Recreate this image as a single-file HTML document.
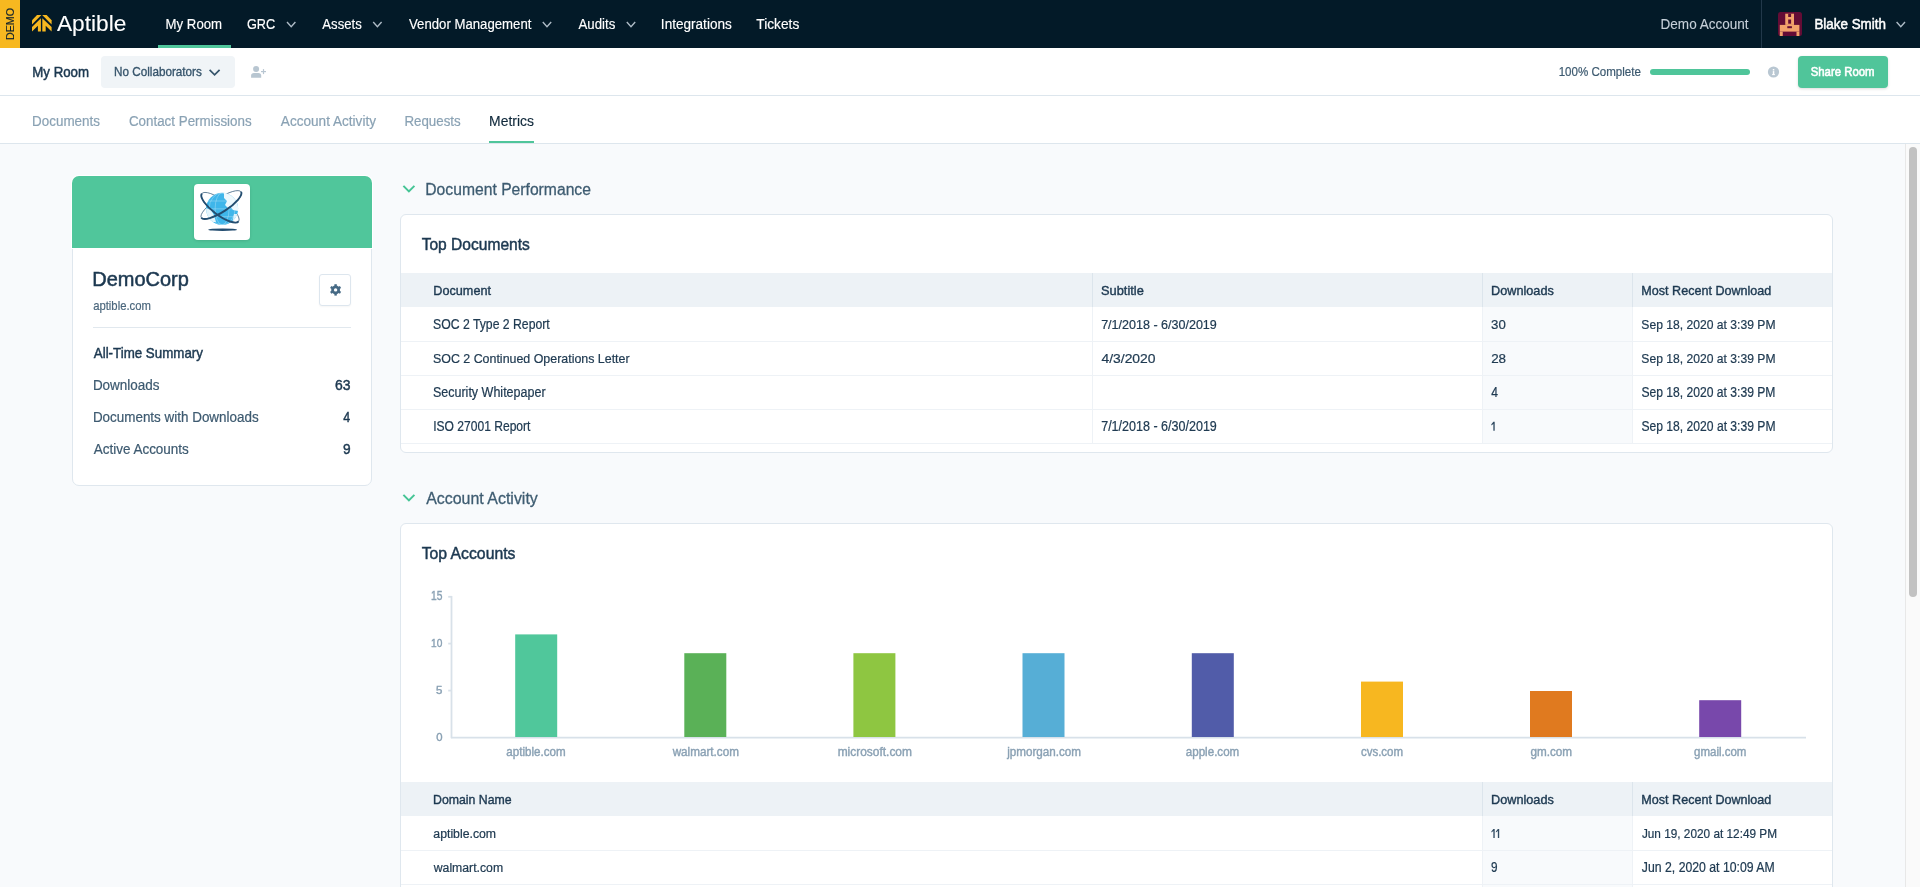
<!DOCTYPE html>
<html><head><meta charset="utf-8">
<style>
*{box-sizing:border-box;margin:0;padding:0}
html,body{width:1920px;height:887px;overflow:hidden;background:#f8fafc;font-family:"Liberation Sans",sans-serif;color:#1e3a50}
.b{position:absolute}
svg{position:absolute;overflow:visible}
</style></head>
<body>
<!-- nav -->
<div class="b" style="left:0;top:0;width:1920px;height:48px;background:#031a28"></div>
<div class="b" style="left:0;top:0;width:20px;height:48px;background:#f7b820"></div>
<div class="b" style="left:10px;top:24px;transform:translate(-50%,-50%) rotate(-90deg);font-size:10.7px;line-height:12px;color:#0b1e2c;white-space:nowrap;-webkit-text-stroke:0.2px #0b1e2c;will-change:transform">DEMO</div>
<svg style="left:0;top:0" width="60" height="48" viewBox="0 0 60 48">
  <g fill="#f7b820">
    <polygon points="37.0,14.9 41.4,14.9 32,24.4 32,20.2"/>
    <polygon points="40.9,18.3 40.9,31.5 37.9,31.5 37.9,25.8 32,31.5 32,27.0"/>
    <polygon points="42.2,14.9 46.6,14.9 51.6,20.2 51.6,24.4"/>
    <polygon points="42.3,18.3 51.6,27.0 51.6,31.5 45.7,25.8 45.7,31.5 42.3,31.5"/>
  </g>
</svg>
<div class="b" style="left:158px;top:45px;width:73px;height:3px;background:#4fc59a"></div>
<svg style="left:0;top:0" width="1920" height="48">
  <g fill="none" stroke="#aebbc6" stroke-width="1.4">
    <polyline points="287,22 291.2,26.7 295.4,22"/>
    <polyline points="373.2,22 377.4,26.7 381.6,22"/>
    <polyline points="542.8,22 547,26.7 551.2,22"/>
    <polyline points="626.8,22 631,26.7 635.2,22"/>
    <polyline points="1896.6,22 1900.8,26.7 1905,22"/>
  </g>
</svg>
<div class="b" style="left:1761px;top:0;width:1px;height:48px;background:#22384a"></div>
<svg style="left:1778px;top:12px" width="24" height="24" viewBox="0 0 24 24">
  <rect width="24" height="24" rx="2.5" fill="#640c35"/>
  <g fill="#f3a26b">
    <rect x="7.25" y="1.7" width="8.75" height="11.2"/>
    <rect x="1.8" y="12.9" width="19.6" height="6.7"/>
    <rect x="1.8" y="19.6" width="2.95" height="4.4"/>
    <rect x="18.5" y="19.6" width="2.9" height="4.4"/>
  </g>
  <g fill="#640c35">
    <rect x="10.2" y="1.7" width="2.9" height="3.3"/>
    <rect x="10.2" y="7.5" width="2.9" height="4.2"/>
    <rect x="9.3" y="14.2" width="4.6" height="2"/>
  </g>
</svg>

<!-- subheader -->
<div class="b" style="left:0;top:48px;width:1920px;height:48px;background:#fff;border-bottom:1px solid #dde6ed"></div>
<div class="b" style="left:101px;top:56px;width:134px;height:32px;background:#f0f4f7;border-radius:4px"></div>
<svg style="left:0;top:48px" width="300" height="48">
  <polyline points="209.6,21.8 214.6,26.8 219.6,21.8" fill="none" stroke="#36546b" stroke-width="1.7"/>
  <g fill="#b8c6d1">
    <circle cx="256.1" cy="20.9" r="3"/>
    <path d="M251.1,29.8 L251.1,27.6 Q251.1,25 254,25 L258.3,25 Q261.2,25 261.2,27.6 L261.2,29.8 Z"/>
    <rect x="261" y="23" width="5" height="1.2"/>
    <rect x="262.9" y="21.1" width="1.2" height="5"/>
  </g>
</svg>
<div class="b" style="left:1650px;top:69px;width:100px;height:6px;border-radius:3px;background:#4fc59a"></div>
<svg style="left:1767px;top:66px" width="13" height="13" viewBox="0 0 13 13">
  <circle cx="6.5" cy="6" r="5.6" fill="#b9c7d2"/>
  <rect x="5.8" y="3.0" width="1.5" height="1.5" fill="#fff"/>
  <rect x="5.8" y="5.1" width="1.5" height="3.9" fill="#fff"/>
  <rect x="5.0" y="8.2" width="3" height="0.9" fill="#fff"/>
</svg>
<div class="b" style="left:1798px;top:56px;width:90px;height:32px;background:#50c59a;border-radius:4px;box-shadow:0 1px 3px rgba(0,0,0,0.14)"></div>

<!-- tabs -->
<div class="b" style="left:0;top:96px;width:1920px;height:48px;background:#fff;border-bottom:1px solid #dde6ed"></div>
<div class="b" style="left:489px;top:141px;width:45px;height:2px;background:#4fc59a"></div>

<!-- sidebar card -->
<div class="b" style="left:72px;top:176px;width:300px;height:310px;background:#fff;border:1px solid #dfe7ee;border-radius:7px"></div>
<div class="b" style="left:72px;top:176px;width:300px;height:72px;background:#50c69b;border-radius:7px 7px 0 0;box-shadow:0 0 0 1px #fff"></div>
<div class="b" style="left:194px;top:184px;width:56px;height:56px;background:#fff;border-radius:4px;box-shadow:0 1px 3px rgba(0,0,0,0.12)"></div>
<svg style="left:194px;top:184px" width="56" height="56" viewBox="0 0 56 56">
  <defs><clipPath id="gc"><circle cx="28.1" cy="24.85" r="16"/></clipPath></defs>
  <g fill="none" stroke="#234d70">
    <ellipse cx="26.2" cy="23.5" rx="23" ry="7.5" transform="rotate(37 26.2 23.5)" stroke-width="0.65"/>
    <ellipse cx="27.2" cy="20.8" rx="23.7" ry="7" transform="rotate(-33 27.2 20.8)" stroke-width="0.65"/>
  </g>
  <circle cx="28.1" cy="24.85" r="16" fill="#3fb6ea"/>
  <g clip-path="url(#gc)">
    <path d="M30,8 L44,8 L44,27 L39,26 L36,22 L34,24 L31,21 L33,17 L30,14 Z" fill="#fff" opacity="0.9"/>
    <path d="M11,24 L17,26 L20,31 L22,38 L11,38 Z" fill="#fff" opacity="0.85"/>
    <path d="M40,30 L44,30 L44,40 L38,40 Z" fill="#fff" opacity="0.8"/>
    <g fill="none" stroke="#ffffff" stroke-width="0.5" opacity="0.55">
      <ellipse cx="28.1" cy="24.85" rx="7" ry="16"/>
      <ellipse cx="28.1" cy="24.85" rx="13" ry="16"/>
      <line x1="10" y1="17" x2="46" y2="17"/>
      <line x1="10" y1="24.85" x2="46" y2="24.85"/>
      <line x1="10" y1="32.7" x2="46" y2="32.7"/>
    </g>
  </g>
  <g fill="none" stroke="#234d70" stroke-width="1.9">
    <path d="M-23,0 A23,7.5 0 0 0 23,0" transform="translate(26.2 23.5) rotate(37)"/>
    <path d="M-23.7,0 A23.7,7 0 0 0 23.7,0" transform="translate(27.2 20.8) rotate(-33)"/>
  </g>
  <ellipse cx="28.65" cy="45.7" rx="14.5" ry="1.2" fill="#234d70"/>
</svg>
<div class="b" style="left:319px;top:274px;width:32px;height:32px;border:1px solid #dde6ee;border-radius:3px;background:#fff;box-shadow:0 1px 2px rgba(0,0,0,0.04)"></div>
<svg style="left:327px;top:282px" width="17" height="17" viewBox="0 0 17 17">
  <g fill="#466a85">
    <circle cx="8.6" cy="7.9" r="4.4"/>
    <rect x="7.4" y="2.2" width="2.4" height="11.4"/>
    <rect x="7.4" y="2.2" width="2.4" height="11.4" transform="rotate(60 8.6 7.9)"/>
    <rect x="7.4" y="2.2" width="2.4" height="11.4" transform="rotate(120 8.6 7.9)"/>
  </g>
  <circle cx="8.6" cy="7.9" r="1.7" fill="#fff"/>
</svg>
<div class="b" style="left:93px;top:327px;width:258px;height:1px;background:#e1e8ee"></div>

<!-- section chevrons -->
<svg style="left:400px;top:180px" width="20" height="20" viewBox="0 0 20 20">
  <polyline points="3.4,5.9 8.9,11.4 14.4,5.9" fill="none" stroke="#45c495" stroke-width="2"/>
</svg>
<svg style="left:400px;top:489px" width="20" height="20" viewBox="0 0 20 20">
  <polyline points="3.4,5.9 8.9,11.4 14.4,5.9" fill="none" stroke="#45c495" stroke-width="2"/>
</svg>

<!-- card 1 -->
<div class="b" style="left:400px;top:214px;width:1433px;height:239px;background:#fff;border:1px solid #dfe7ee;border-radius:6px;overflow:hidden">
  <div class="b" style="left:0;top:58px;width:1431px;height:34px;background:#edf2f6"></div>
  <div class="b" style="left:1082px;top:92px;width:150px;height:136px;background:#f8fafc"></div>
  <div class="b" style="left:0;top:126px;width:1431px;height:1px;background:#eef2f6"></div>
  <div class="b" style="left:0;top:160px;width:1431px;height:1px;background:#eef2f6"></div>
  <div class="b" style="left:0;top:194px;width:1431px;height:1px;background:#eef2f6"></div>
  <div class="b" style="left:0;top:228px;width:1431px;height:1px;background:#eef2f6"></div>
  <div class="b" style="left:691px;top:58px;width:1px;height:34px;background:#dce5ec"></div>
  <div class="b" style="left:1081px;top:58px;width:1px;height:34px;background:#dce5ec"></div>
  <div class="b" style="left:1231px;top:58px;width:1px;height:34px;background:#dce5ec"></div>
  <div class="b" style="left:691px;top:92px;width:1px;height:136px;background:#eef2f6"></div>
  <div class="b" style="left:1081px;top:92px;width:1px;height:136px;background:#eef2f6"></div>
  <div class="b" style="left:1231px;top:92px;width:1px;height:136px;background:#eef2f6"></div>
</div>

<!-- card 2 -->
<div class="b" style="left:400px;top:523px;width:1433px;height:400px;background:#fff;border:1px solid #dfe7ee;border-radius:6px;overflow:hidden">
  <div class="b" style="left:0;top:258px;width:1431px;height:34px;background:#edf2f6"></div>
  <div class="b" style="left:1082px;top:292px;width:150px;height:100px;background:#f8fafc"></div>
  <div class="b" style="left:0;top:326px;width:1431px;height:1px;background:#eef2f6"></div>
  <div class="b" style="left:0;top:360px;width:1431px;height:1px;background:#eef2f6"></div>
  <div class="b" style="left:1081px;top:258px;width:1px;height:34px;background:#dce5ec"></div>
  <div class="b" style="left:1231px;top:258px;width:1px;height:34px;background:#dce5ec"></div>
  <div class="b" style="left:1081px;top:292px;width:1px;height:100px;background:#eef2f6"></div>
  <div class="b" style="left:1231px;top:292px;width:1px;height:100px;background:#eef2f6"></div>
</div>
<svg style="left:0;top:0" width="1920" height="887">
  <g stroke="#d8e1e9" stroke-width="1.8" fill="none">
    <line x1="451.5" y1="596" x2="451.5" y2="738.2"/>
    <line x1="448.2" y1="596.8" x2="452" y2="596.8"/>
    <line x1="448.2" y1="643.6" x2="452" y2="643.6"/>
    <line x1="448.2" y1="690.6" x2="452" y2="690.6"/>
    <line x1="451" y1="737.6" x2="1806" y2="737.6"/>
  </g>
  <rect x="515.2" y="634.4" width="42" height="102.6" fill="#50c79b"/>
  <rect x="684.3" y="653.2" width="42" height="83.8" fill="#5ab157"/>
  <rect x="853.4" y="653.2" width="42" height="83.8" fill="#8ec641"/>
  <rect x="1022.5" y="653.2" width="42" height="83.8" fill="#56aed6"/>
  <rect x="1191.8" y="653.2" width="42" height="83.8" fill="#515ca9"/>
  <rect x="1361" y="681.6" width="42" height="55.4" fill="#f7b720"/>
  <rect x="1530" y="691" width="42" height="46" fill="#e07a1f"/>
  <rect x="1699.2" y="700.2" width="42" height="36.8" fill="#7848ab"/>
</svg>

<!-- scrollbar -->
<div class="b" style="left:1905px;top:144px;width:15px;height:743px;background:#fafafa;border-left:1px solid #e8e8e8"></div>
<div class="b" style="left:1909px;top:147px;width:8px;height:450px;border-radius:4px;background:#c2c2c2"></div>

<svg style="left:0;top:0" width="1920" height="887"><g fill="#324c63"><path d="M1493.35,421.8 h1.35 v9 h-1.35 v-6.9 l-2.0,1.5 v-1.2 Z"/><path d="M1493.35,829.0 h1.35 v9 h-1.35 v-6.9 l-2.0,1.5 v-1.2 Z"/><path d="M1497.85,829.0 h1.35 v9 h-1.35 v-6.9 l-2.0,1.5 v-1.2 Z"/></g></svg>
<svg style="left:0;top:0;will-change:transform" width="1920" height="887" font-family="Liberation Sans">
<text x="56.98" y="31" font-size="22.32" textLength="69.35" lengthAdjust="spacingAndGlyphs" fill="#ffffff" stroke="#ffffff" stroke-width="0.1">Aptible</text>
<text x="165.59" y="29" font-size="14.35" textLength="56.49" lengthAdjust="spacingAndGlyphs" fill="#ffffff" stroke="#ffffff" stroke-width="0.15">My Room</text>
<text x="246.96" y="29" font-size="14.35" textLength="28.25" lengthAdjust="spacingAndGlyphs" fill="#ffffff" stroke="#ffffff" stroke-width="0.15">GRC</text>
<text x="322.35" y="29" font-size="14.35" textLength="39.41" lengthAdjust="spacingAndGlyphs" fill="#ffffff" stroke="#ffffff" stroke-width="0.15">Assets</text>
<text x="409.02" y="29" font-size="14.35" textLength="122.40" lengthAdjust="spacingAndGlyphs" fill="#ffffff" stroke="#ffffff" stroke-width="0.15">Vendor Management</text>
<text x="578.55" y="29" font-size="14.35" textLength="36.74" lengthAdjust="spacingAndGlyphs" fill="#ffffff" stroke="#ffffff" stroke-width="0.15">Audits</text>
<text x="660.86" y="29" font-size="14.35" textLength="70.93" lengthAdjust="spacingAndGlyphs" fill="#ffffff" stroke="#ffffff" stroke-width="0.15">Integrations</text>
<text x="756.33" y="29" font-size="14.35" textLength="42.93" lengthAdjust="spacingAndGlyphs" fill="#ffffff" stroke="#ffffff" stroke-width="0.15">Tickets</text>
<text x="1660.57" y="29" font-size="14.35" textLength="88.00" lengthAdjust="spacingAndGlyphs" fill="#c5cfd8" stroke="#c5cfd8" stroke-width="0.1">Demo Account</text>
<text x="1814.41" y="29" font-size="14.35" textLength="71.52" lengthAdjust="spacingAndGlyphs" fill="#ffffff" stroke="#ffffff" stroke-width="0.5">Blake Smith</text>
<text x="32.29" y="77" font-size="14.49" textLength="56.74" lengthAdjust="spacingAndGlyphs" fill="#1c3850" stroke="#1c3850" stroke-width="0.5">My Room</text>
<text x="114.09" y="76" font-size="13.04" textLength="87.72" lengthAdjust="spacingAndGlyphs" fill="#36546b" stroke="#36546b" stroke-width="0.35">No Collaborators</text>
<text x="1558.63" y="76" font-size="12.61" textLength="82.20" lengthAdjust="spacingAndGlyphs" fill="#3d5a70" stroke="#3d5a70" stroke-width="0.22">100% Complete</text>
<text x="1810.70" y="76" font-size="13.19" textLength="63.92" lengthAdjust="spacingAndGlyphs" fill="#ffffff" stroke="#ffffff" stroke-width="0.6">Share Room</text>
<text x="32.09" y="126" font-size="14.64" textLength="67.83" lengthAdjust="spacingAndGlyphs" fill="#8aa2b4" stroke="#8aa2b4" stroke-width="0.2">Documents</text>
<text x="128.91" y="126" font-size="14.64" textLength="122.75" lengthAdjust="spacingAndGlyphs" fill="#8aa2b4" stroke="#8aa2b4" stroke-width="0.2">Contact Permissions</text>
<text x="280.84" y="126" font-size="14.49" textLength="95.14" lengthAdjust="spacingAndGlyphs" fill="#8aa2b4" stroke="#8aa2b4" stroke-width="0.2">Account Activity</text>
<text x="404.42" y="126" font-size="14.49" textLength="56.32" lengthAdjust="spacingAndGlyphs" fill="#8aa2b4" stroke="#8aa2b4" stroke-width="0.2">Requests</text>
<text x="489.08" y="126" font-size="14.49" textLength="44.82" lengthAdjust="spacingAndGlyphs" fill="#10293b" stroke="#10293b" stroke-width="0.15">Metrics</text>
<text x="92.26" y="286" font-size="20.87" textLength="96.59" lengthAdjust="spacingAndGlyphs" fill="#1c3850" stroke="#1c3850" stroke-width="0.55">DemoCorp</text>
<text x="93.13" y="310" font-size="13.15" textLength="57.85" lengthAdjust="spacingAndGlyphs" fill="#4a667c" stroke="#4a667c" stroke-width="0.2">aptible.com</text>
<text x="93.79" y="358" font-size="14.20" textLength="109.12" lengthAdjust="spacingAndGlyphs" fill="#1c3850" stroke="#1c3850" stroke-width="0.45">All-Time Summary</text>
<text x="92.89" y="390" font-size="14.35" textLength="66.69" lengthAdjust="spacingAndGlyphs" fill="#3d5a70" stroke="#3d5a70" stroke-width="0.22">Downloads</text>
<text x="334.97" y="390" font-size="14.35" textLength="15.55" lengthAdjust="spacingAndGlyphs" fill="#1c3850" stroke="#1c3850" stroke-width="0.45">63</text>
<text x="92.88" y="422" font-size="14.49" textLength="165.78" lengthAdjust="spacingAndGlyphs" fill="#3d5a70" stroke="#3d5a70" stroke-width="0.22">Documents with Downloads</text>
<text x="343.27" y="422" font-size="14.49" textLength="6.94" lengthAdjust="spacingAndGlyphs" fill="#1c3850" stroke="#1c3850" stroke-width="0.45">4</text>
<text x="93.66" y="454" font-size="14.78" textLength="95.21" lengthAdjust="spacingAndGlyphs" fill="#3d5a70" stroke="#3d5a70" stroke-width="0.22">Active Accounts</text>
<text x="342.88" y="454" font-size="14.78" textLength="7.63" lengthAdjust="spacingAndGlyphs" fill="#1c3850" stroke="#1c3850" stroke-width="0.45">9</text>
<text x="425.27" y="195" font-size="17.25" textLength="165.68" lengthAdjust="spacingAndGlyphs" fill="#3e5c71" stroke="#3e5c71" stroke-width="0.3">Document Performance</text>
<text x="421.66" y="250" font-size="17.25" textLength="108.20" lengthAdjust="spacingAndGlyphs" fill="#1c3850" stroke="#1c3850" stroke-width="0.5">Top Documents</text>
<text x="433.32" y="295" font-size="13.62" textLength="57.66" lengthAdjust="spacingAndGlyphs" fill="#1c3850" stroke="#1c3850" stroke-width="0.4">Document</text>
<text x="1101.08" y="295" font-size="13.04" textLength="42.71" lengthAdjust="spacingAndGlyphs" fill="#1c3850" stroke="#1c3850" stroke-width="0.4">Subtitle</text>
<text x="1491.01" y="295" font-size="13.33" textLength="62.80" lengthAdjust="spacingAndGlyphs" fill="#1c3850" stroke="#1c3850" stroke-width="0.4">Downloads</text>
<text x="1641.33" y="295" font-size="13.33" textLength="130.03" lengthAdjust="spacingAndGlyphs" fill="#1c3850" stroke="#1c3850" stroke-width="0.4">Most Recent Download</text>
<text x="433.03" y="329" font-size="13.91" textLength="116.74" lengthAdjust="spacingAndGlyphs" fill="#203b52" stroke="#203b52" stroke-width="0.22">SOC 2 Type 2 Report</text>
<text x="1101.16" y="329" font-size="13.33" textLength="115.66" lengthAdjust="spacingAndGlyphs" fill="#203b52" stroke="#203b52" stroke-width="0.22">7/1/2018 - 6/30/2019</text>
<text x="1491.10" y="329" font-size="13.62" textLength="14.71" lengthAdjust="spacingAndGlyphs" fill="#203b52" stroke="#203b52" stroke-width="0.22">30</text>
<text x="1641.36" y="329" font-size="13.62" textLength="134.14" lengthAdjust="spacingAndGlyphs" fill="#203b52" stroke="#203b52" stroke-width="0.22">Sep 18, 2020 at 3:39 PM</text>
<text x="432.96" y="363" font-size="13.62" textLength="196.65" lengthAdjust="spacingAndGlyphs" fill="#203b52" stroke="#203b52" stroke-width="0.22">SOC 2 Continued Operations Letter</text>
<text x="1101.51" y="363" font-size="13.48" textLength="54.04" lengthAdjust="spacingAndGlyphs" fill="#203b52" stroke="#203b52" stroke-width="0.22">4/3/2020</text>
<text x="1491.15" y="363" font-size="13.62" textLength="14.92" lengthAdjust="spacingAndGlyphs" fill="#203b52" stroke="#203b52" stroke-width="0.22">28</text>
<text x="1641.36" y="363" font-size="13.62" textLength="134.14" lengthAdjust="spacingAndGlyphs" fill="#203b52" stroke="#203b52" stroke-width="0.22">Sep 18, 2020 at 3:39 PM</text>
<text x="432.93" y="397" font-size="14.06" textLength="112.65" lengthAdjust="spacingAndGlyphs" fill="#203b52" stroke="#203b52" stroke-width="0.22">Security Whitepaper</text>
<text x="1491.19" y="397" font-size="13.77" textLength="6.72" lengthAdjust="spacingAndGlyphs" fill="#203b52" stroke="#203b52" stroke-width="0.22">4</text>
<text x="1641.40" y="397" font-size="13.77" textLength="134.04" lengthAdjust="spacingAndGlyphs" fill="#203b52" stroke="#203b52" stroke-width="0.22">Sep 18, 2020 at 3:39 PM</text>
<text x="433.19" y="431" font-size="13.91" textLength="97.23" lengthAdjust="spacingAndGlyphs" fill="#203b52" stroke="#203b52" stroke-width="0.22">ISO 27001 Report</text>
<text x="1101.17" y="431" font-size="14.06" textLength="115.66" lengthAdjust="spacingAndGlyphs" fill="#203b52" stroke="#203b52" stroke-width="0.22">7/1/2018 - 6/30/2019</text>
<text x="1641.40" y="431" font-size="14.06" textLength="134.13" lengthAdjust="spacingAndGlyphs" fill="#203b52" stroke="#203b52" stroke-width="0.22">Sep 18, 2020 at 3:39 PM</text>
<text x="426.17" y="504" font-size="17.25" textLength="111.66" lengthAdjust="spacingAndGlyphs" fill="#3e5c71" stroke="#3e5c71" stroke-width="0.3">Account Activity</text>
<text x="421.67" y="559" font-size="17.25" textLength="93.77" lengthAdjust="spacingAndGlyphs" fill="#1c3850" stroke="#1c3850" stroke-width="0.5">Top Accounts</text>
<text x="433.00" y="804" font-size="13.33" textLength="78.70" lengthAdjust="spacingAndGlyphs" fill="#1c3850" stroke="#1c3850" stroke-width="0.4">Domain Name</text>
<text x="1491.01" y="804" font-size="13.33" textLength="62.80" lengthAdjust="spacingAndGlyphs" fill="#1c3850" stroke="#1c3850" stroke-width="0.4">Downloads</text>
<text x="1641.33" y="804" font-size="13.33" textLength="130.03" lengthAdjust="spacingAndGlyphs" fill="#1c3850" stroke="#1c3850" stroke-width="0.4">Most Recent Download</text>
<text x="433.35" y="838" font-size="12.21" textLength="62.74" lengthAdjust="spacingAndGlyphs" fill="#203b52" stroke="#203b52" stroke-width="0.22">aptible.com</text>
<text x="1641.89" y="838" font-size="13.19" textLength="135.18" lengthAdjust="spacingAndGlyphs" fill="#203b52" stroke="#203b52" stroke-width="0.22">Jun 19, 2020 at 12:49 PM</text>
<text x="433.75" y="872" font-size="12.62" textLength="69.34" lengthAdjust="spacingAndGlyphs" fill="#203b52" stroke="#203b52" stroke-width="0.22">walmart.com</text>
<text x="1491.12" y="872" font-size="13.77" textLength="6.54" lengthAdjust="spacingAndGlyphs" fill="#203b52" stroke="#203b52" stroke-width="0.22">9</text>
<text x="1641.86" y="872" font-size="13.77" textLength="132.83" lengthAdjust="spacingAndGlyphs" fill="#203b52" stroke="#203b52" stroke-width="0.22">Jun 2, 2020 at 10:09 AM</text>
<text x="431.11" y="600" font-size="12.03" textLength="11.42" lengthAdjust="spacingAndGlyphs" fill="#8aa1b4" stroke="#8aa1b4" stroke-width="0.4">15</text>
<text x="431.09" y="647" font-size="11.01" textLength="11.28" lengthAdjust="spacingAndGlyphs" fill="#8aa1b4" stroke="#8aa1b4" stroke-width="0.4">10</text>
<text x="436.01" y="694" font-size="10.87" textLength="6.37" lengthAdjust="spacingAndGlyphs" fill="#8aa1b4" stroke="#8aa1b4" stroke-width="0.4">5</text>
<text x="436.17" y="741" font-size="11.45" textLength="6.30" lengthAdjust="spacingAndGlyphs" fill="#8aa1b4" stroke="#8aa1b4" stroke-width="0.4">0</text>
<text x="506.25" y="756" font-size="12.08" textLength="59.38" lengthAdjust="spacingAndGlyphs" fill="#8aa1b4" stroke="#8aa1b4" stroke-width="0.4">aptible.com</text>
<text x="672.63" y="756" font-size="12.08" textLength="66.24" lengthAdjust="spacingAndGlyphs" fill="#8aa1b4" stroke="#8aa1b4" stroke-width="0.4">walmart.com</text>
<text x="837.65" y="756" font-size="12.08" textLength="74.32" lengthAdjust="spacingAndGlyphs" fill="#8aa1b4" stroke="#8aa1b4" stroke-width="0.4">microsoft.com</text>
<text x="1007.22" y="756" font-size="12.08" textLength="73.82" lengthAdjust="spacingAndGlyphs" fill="#8aa1b4" stroke="#8aa1b4" stroke-width="0.4">jpmorgan.com</text>
<text x="1185.81" y="756" font-size="12.08" textLength="53.44" lengthAdjust="spacingAndGlyphs" fill="#8aa1b4" stroke="#8aa1b4" stroke-width="0.4">apple.com</text>
<text x="1360.89" y="756" font-size="12.08" textLength="42.18" lengthAdjust="spacingAndGlyphs" fill="#8aa1b4" stroke="#8aa1b4" stroke-width="0.4">cvs.com</text>
<text x="1530.49" y="756" font-size="12.08" textLength="41.59" lengthAdjust="spacingAndGlyphs" fill="#8aa1b4" stroke="#8aa1b4" stroke-width="0.4">gm.com</text>
<text x="1694.09" y="756" font-size="12.08" textLength="52.35" lengthAdjust="spacingAndGlyphs" fill="#8aa1b4" stroke="#8aa1b4" stroke-width="0.4">gmail.com</text>
</svg>
</body></html>
